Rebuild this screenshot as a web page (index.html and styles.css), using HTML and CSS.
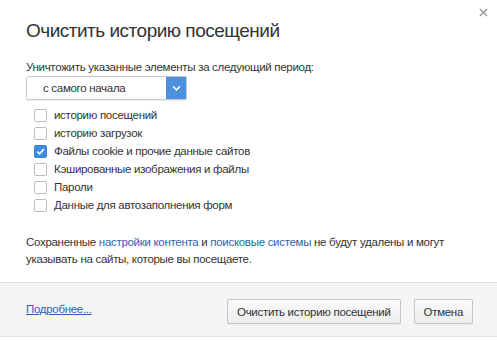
FILE: index.html
```html
<!DOCTYPE html>
<html lang="ru">
<head>
    <meta charset="UTF-8">
    <title>Очистить историю посещений</title>
    <link rel="stylesheet" href="styles.css">
</head>
<body>
    <div class="dialog">
        <button class="close" aria-label="Закрыть">
            <svg viewBox="0 0 10 10" width="9" height="9">
                <path d="M1 1L9 9M9 1L1 9" stroke="#999" stroke-width="1.6"></path>
            </svg>
        </button>
        <h1 class="title">Очистить историю посещений</h1>

        <div class="body">
            <div class="period-label">Уничтожить указанные элементы за следующий период:</div>
            <div class="select">
                <span class="select-value">с самого начала</span>
                <span class="select-arrow">
                    <svg viewBox="0 0 10 6" width="9" height="6">
                        <path d="M1 1l4 4 4-4" fill="none" stroke="#fff" stroke-width="1.8"></path>
                    </svg>
                </span>
            </div>

            <ul class="options">
                <li><span class="box"></span>историю посещений</li>
                <li><span class="box"></span>историю загрузок</li>
                <li><span class="box checked">
                    <svg viewBox="0 0 12 12" width="11" height="11">
                        <path d="M2.5 6.2l2.4 2.4 4.8-5.2" fill="none" stroke="#fff" stroke-width="1.8"></path>
                    </svg>
                </span>Файлы cookie и прочие данные сайтов</li>
                <li><span class="box"></span>Кэшированные изображения и файлы</li>
                <li><span class="box"></span>Пароли</li>
                <li><span class="box"></span>Данные для автозаполнения форм</li>
            </ul>

            <div class="note">
                <div class="note-line">Сохраненные <a href="#">настройки контента</a> и <a href="#">поисковые системы</a> не будут удалены и могут</div>
                <div class="note-line">указывать на сайты, которые вы посещаете.</div>
            </div>
        </div>

        <div class="footer">
            <a href="#" class="more">Подробнее...</a>
            <div class="actions">
                <button class="btn">Очистить историю посещений</button>
                <button class="btn">Отмена</button>
            </div>
        </div>
    </div>
</body>
</html>
```

FILE: styles.css
```css
body {
    margin: 0;
    background: #fff;
    font-family: 'Liberation Sans', Arial, sans-serif;
    font-size: 11.5px;
    letter-spacing: -0.3px;
    color: #333;
}
.dialog {
    position: relative;
    width: 497px;
    height: 340px;
    display: flex;
    flex-direction: column;
}
.close {
    position: absolute;
    top: 6px;
    right: 7px;
    border: none;
    background: none;
    padding: 2px;
}
.close svg {
    display: block;
}
.title {
    margin: 0;
    padding: 13px 26px 0;
    font-size: 19px;
    letter-spacing: -0.5px;
    font-weight: normal;
    line-height: 36px;
    color: #333;
}
.body {
    padding: 11px 26px 0;
    flex: 1;
}
.period-label {
    line-height: 15px;
}
.select {
    display: flex;
    width: 159px;
    height: 22px;
    margin-top: 1px;
    border: 1px solid #c8c8c8;
    border-radius: 2px;
    box-shadow: 0 1px 1px rgba(0, 0, 0, 0.08);
}
.select-value {
    flex: 1;
    padding-left: 16px;
    line-height: 22px;
}
.select-arrow {
    width: 20px;
    background: #4d90de;
    display: flex;
    align-items: center;
    justify-content: center;
}
.options {
    list-style: none;
    margin: 6px 0 0;
    padding: 0 0 0 8px;
}
.options li {
    display: flex;
    align-items: center;
    height: 18px;
}
.box {
    width: 11px;
    height: 11px;
    margin-right: 7px;
    border: 1px solid #bdbdbd;
    border-radius: 2px;
    background: #fff;
    display: flex;
    align-items: center;
    justify-content: center;
}
.box.checked {
    background: #3d8ee0;
    border-color: #3584d6;
}
.note {
    margin-top: 20px;
    line-height: 17px;
}
.note-line {
    white-space: nowrap;
}
.note a {
    color: #2b63ad;
    text-decoration: none;
}
.footer {
    height: 53px;
    margin-bottom: 3px;
    border-top: 1px solid #e2e2e2;
    border-bottom: 1px solid #e2e2e2;
    background: #f5f5f5;
    display: flex;
    align-items: center;
    justify-content: space-between;
    padding: 0 24px 0 26px;
}
.more {
    color: #2b63ad;
    margin-top: -2px;
}
.actions {
    display: flex;
    gap: 13px;
    margin-top: 4px;
}
.btn {
    height: 25px;
    padding: 0 9px;
    font-family: inherit;
    font-size: 11.5px;
    letter-spacing: -0.3px;
    color: #333;
    background: linear-gradient(#fafafa, #ededed);
    border: 1px solid #c6c6c6;
    border-radius: 2px;
    box-shadow: 0 1px 1px rgba(0, 0, 0, 0.06);
}
```
